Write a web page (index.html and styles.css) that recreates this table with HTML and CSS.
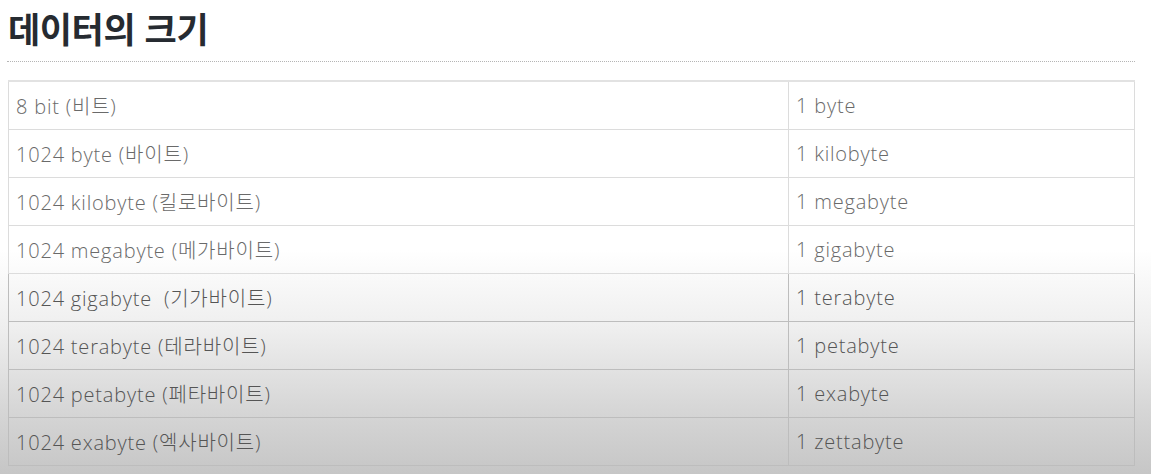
FILE: index.html
```html
<!DOCTYPE html>
<html lang="ko">
<head>
  <meta charset="UTF-8">
  <title>데이터의 크기</title>
  <link rel="stylesheet" href="styles.css">
</head>
<body>
  <div class="post">
    <h2 class="post-title">데이터의 크기</h2>
    <hr class="divider">
    <table class="size-table">
      <tr><td>8 bit (비트)</td><td>1 byte</td></tr>
      <tr><td>1024 byte (바이트)</td><td>1 kilobyte</td></tr>
      <tr><td>1024 kilobyte (킬로바이트)</td><td>1 megabyte</td></tr>
      <tr><td>1024 megabyte (메가바이트)</td><td>1 gigabyte</td></tr>
      <tr><td>1024 gigabyte&nbsp; (기가바이트)</td><td>1 terabyte</td></tr>
      <tr><td>1024 terabyte (테라바이트)</td><td>1 petabyte</td></tr>
      <tr><td>1024 petabyte (페타바이트)</td><td>1 exabyte</td></tr>
      <tr><td>1024 exabyte (엑사바이트)</td><td>1 zettabyte</td></tr>
    </table>
  </div>
</body>
</html>
```

FILE: styles.css
```css
html, body {
  height: 100%;
}
body {
  margin: 0;
  font-family: "Noto Sans CJK KR", "Noto Sans", sans-serif;
  background: linear-gradient(to bottom, #ffffff 0px, #ffffff 250px, #eeeeee 330px, #d6d6d6 410px, #c6c6c6 474px);
  color: #666;
}
.post {
  padding: 0 16px 0 8px;
}
.post-title {
  margin: 0;
  padding-top: 6px;
  font-size: 35px;
  line-height: 44px;
  font-weight: 700;
  color: #262b31;
  letter-spacing: -0.4px;
}
.divider {
  margin: 11px 0 18px -1px;
  border: none;
  border-top: 1px dotted #b5b5b5;
  height: 0;
}
.size-table {
  width: 100%;
  border-collapse: collapse;
  border-top: 2px solid #e2e2e2;
}
.size-table td {
  height: 47px;
  padding: 0 7px;
  border: 1px solid #dcdcdc;
  font-family: "Open Sans", "Noto Sans CJK KR", sans-serif;
  font-size: 20px;
  font-weight: 300;
  letter-spacing: 0.8px;
  color: #6a6a6a;
}
.size-table td:first-child {
  width: 765px;
}
.size-table tr:nth-child(n+5) td {
  border-color: #bdbdbd;
  color: #555;
}
```
